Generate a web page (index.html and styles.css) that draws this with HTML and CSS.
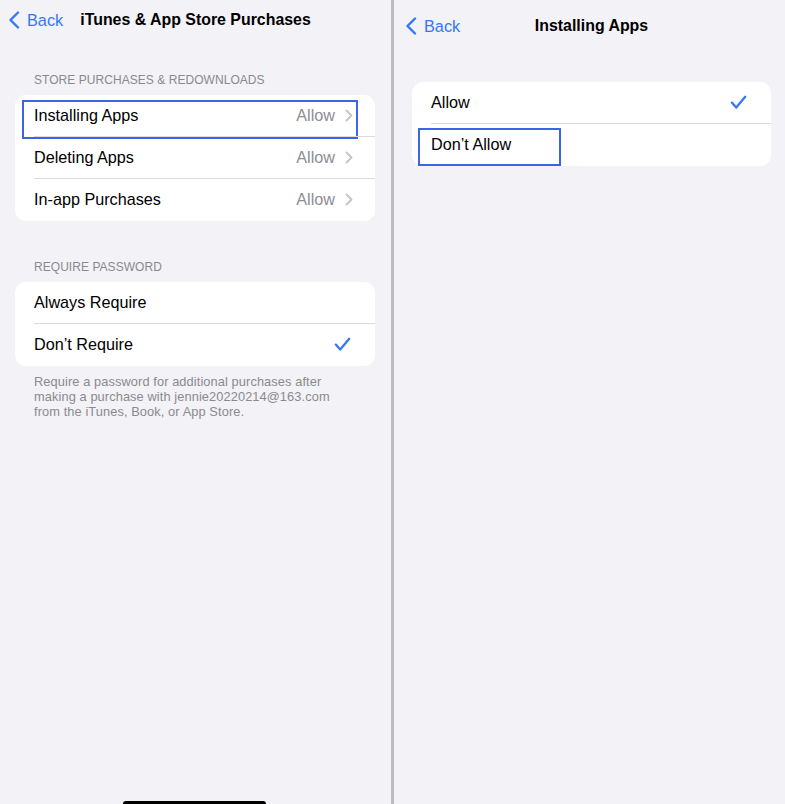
FILE: index.html
```html
<!DOCTYPE html>
<html>
<head>
<meta charset="utf-8">
<link rel="stylesheet" href="styles.css">
</head>
<body>
<div class="screen">
  <section class="panel panel-left">
    <header class="nav nav-left">
      <a class="back">
        <svg class="back-chev" width="12" height="18" viewBox="0 0 12 18"><path d="M10 1.5 L2.5 9 L10 16.5" fill="none" stroke="#3478f6" stroke-width="2.4" stroke-linecap="round" stroke-linejoin="round"/></svg>
        <span>Back</span>
      </a>
      <h1 class="title">iTunes &amp; App Store Purchases</h1>
      <span></span>
    </header>

    <div class="group group-first">
      <div class="group-header">STORE PURCHASES &amp; REDOWNLOADS</div>
      <div class="card">
        <div class="row">
          <span class="label">Installing Apps</span>
          <span class="value">Allow</span>
          <svg class="chev" width="8" height="13" viewBox="0 0 8 13"><path d="M1.5 1.5 L6.5 6.5 L1.5 11.5" fill="none" stroke="#c4c4c7" stroke-width="1.8" stroke-linecap="round" stroke-linejoin="round"/></svg>
          <div class="mark mark-install"></div>
        </div>
        <div class="row">
          <span class="label">Deleting Apps</span>
          <span class="value">Allow</span>
          <svg class="chev" width="8" height="13" viewBox="0 0 8 13"><path d="M1.5 1.5 L6.5 6.5 L1.5 11.5" fill="none" stroke="#c4c4c7" stroke-width="1.8" stroke-linecap="round" stroke-linejoin="round"/></svg>
        </div>
        <div class="row">
          <span class="label">In-app Purchases</span>
          <span class="value">Allow</span>
          <svg class="chev" width="8" height="13" viewBox="0 0 8 13"><path d="M1.5 1.5 L6.5 6.5 L1.5 11.5" fill="none" stroke="#c4c4c7" stroke-width="1.8" stroke-linecap="round" stroke-linejoin="round"/></svg>
        </div>
      </div>
    </div>

    <div class="group group-second">
      <div class="group-header">REQUIRE PASSWORD</div>
      <div class="card">
        <div class="row">
          <span class="label">Always Require</span>
        </div>
        <div class="row">
          <span class="label">Don’t Require</span>
          <svg class="check" width="17" height="15" viewBox="0 0 17 15"><path d="M1.8 7.6 L6.2 12.6 L15.2 1.8" fill="none" stroke="#3478f6" stroke-width="2.3" stroke-linecap="round" stroke-linejoin="round"/></svg>
        </div>
      </div>
      <p class="footer">Require a password for additional purchases after<br>making a purchase with jennie20220214@163.com<br>from the iTunes, Book, or App Store.</p>
    </div>
    <div class="home-indicator"></div>
  </section>

  <div class="divider"></div>

  <section class="panel panel-right">
    <header class="nav nav-right">
      <a class="back">
        <svg class="back-chev" width="12" height="18" viewBox="0 0 12 18"><path d="M10 1.5 L2.5 9 L10 16.5" fill="none" stroke="#3478f6" stroke-width="2.4" stroke-linecap="round" stroke-linejoin="round"/></svg>
        <span>Back</span>
      </a>
      <h1 class="title">Installing Apps</h1>
      <span></span>
    </header>

    <div class="group group-right">
      <div class="card">
        <div class="row">
          <span class="label">Allow</span>
          <svg class="check" width="17" height="15" viewBox="0 0 17 15"><path d="M1.8 7.6 L6.2 12.6 L15.2 1.8" fill="none" stroke="#3478f6" stroke-width="2.3" stroke-linecap="round" stroke-linejoin="round"/></svg>
        </div>
        <div class="row">
          <span class="label">Don’t Allow</span>
          <div class="mark mark-dont"></div>
        </div>
      </div>
    </div>
  </section>
</div>
</body>
</html>
```

FILE: styles.css
```css
* { box-sizing: border-box; }
html, body {
  margin: 0;
  padding: 0;
  background: #f2f2f7;
}
body {
  font-family: "Liberation Sans", Arial, sans-serif;
  color: #000;
  -webkit-font-smoothing: antialiased;
}
.screen {
  display: flex;
  width: 785px;
  height: 804px;
  overflow: hidden;
}
.panel {
  position: relative;
  background: #f2f2f7;
  height: 804px;
}
.panel-left { width: 391px; }
.panel-right { flex: 1; }
.divider {
  width: 3px;
  background: #bdbdc0;
}

.nav {
  display: grid;
  grid-template-columns: 1fr auto 1fr;
  align-items: center;
}
.nav-left { height: 40px; padding: 0 8px; }
.nav-right { height: 52px; padding: 0 7px 0 11px; }
.back {
  display: flex;
  align-items: center;
  gap: 7px;
  color: #3478f6;
  font-size: 16.3px;
}
.title {
  margin: 0;
  font-size: 15.9px;
  font-weight: bold;
  letter-spacing: 0;
}

.group { padding: 0 16px 0 15px; }
.group-first { margin-top: 32px; }
.group-second { margin-top: 38px; }
.group-right { margin-top: 30px; padding: 0 14px 0 18px; }
.group-header {
  height: 16px;
  line-height: 16px;
  font-size: 12px;
  color: #8a8a8e;
  padding-left: 19px;
  margin-bottom: 7px;
  letter-spacing: 0.05px;
}
.card {
  background: #fff;
  border-radius: 11px;
}
.row {
  position: relative;
  display: flex;
  align-items: center;
  height: 42px;
  padding: 0 22px 1px 19px;
  font-size: 16.2px;
}
.row + .row::before {
  content: "";
  position: absolute;
  top: -1px;
  left: 19px;
  right: 0;
  height: 1px;
  background: #dcdce0;
}
.label { flex: 1; }
.value { color: #8e8e93; margin-right: 10px; }
.chev { display: block; }
.check { display: block; margin-right: 2px; }

.mark {
  position: absolute;
  border: 2px solid #3c63e8;
}
.mark-install { left: 7px; top: 5px; width: 336px; height: 39px; }
.mark-dont { left: 6px; top: 4px; width: 143px; height: 38px; }

.footer {
  margin: 8px 0 0;
  padding-left: 19px;
  font-size: 12.8px;
  line-height: 15px;
  color: #8a8a8e;
  letter-spacing: 0.1px;
}

.home-indicator {
  position: absolute;
  left: 123px;
  bottom: -3px;
  width: 143px;
  height: 6px;
  border-radius: 3px;
  background: #000;
}
```
